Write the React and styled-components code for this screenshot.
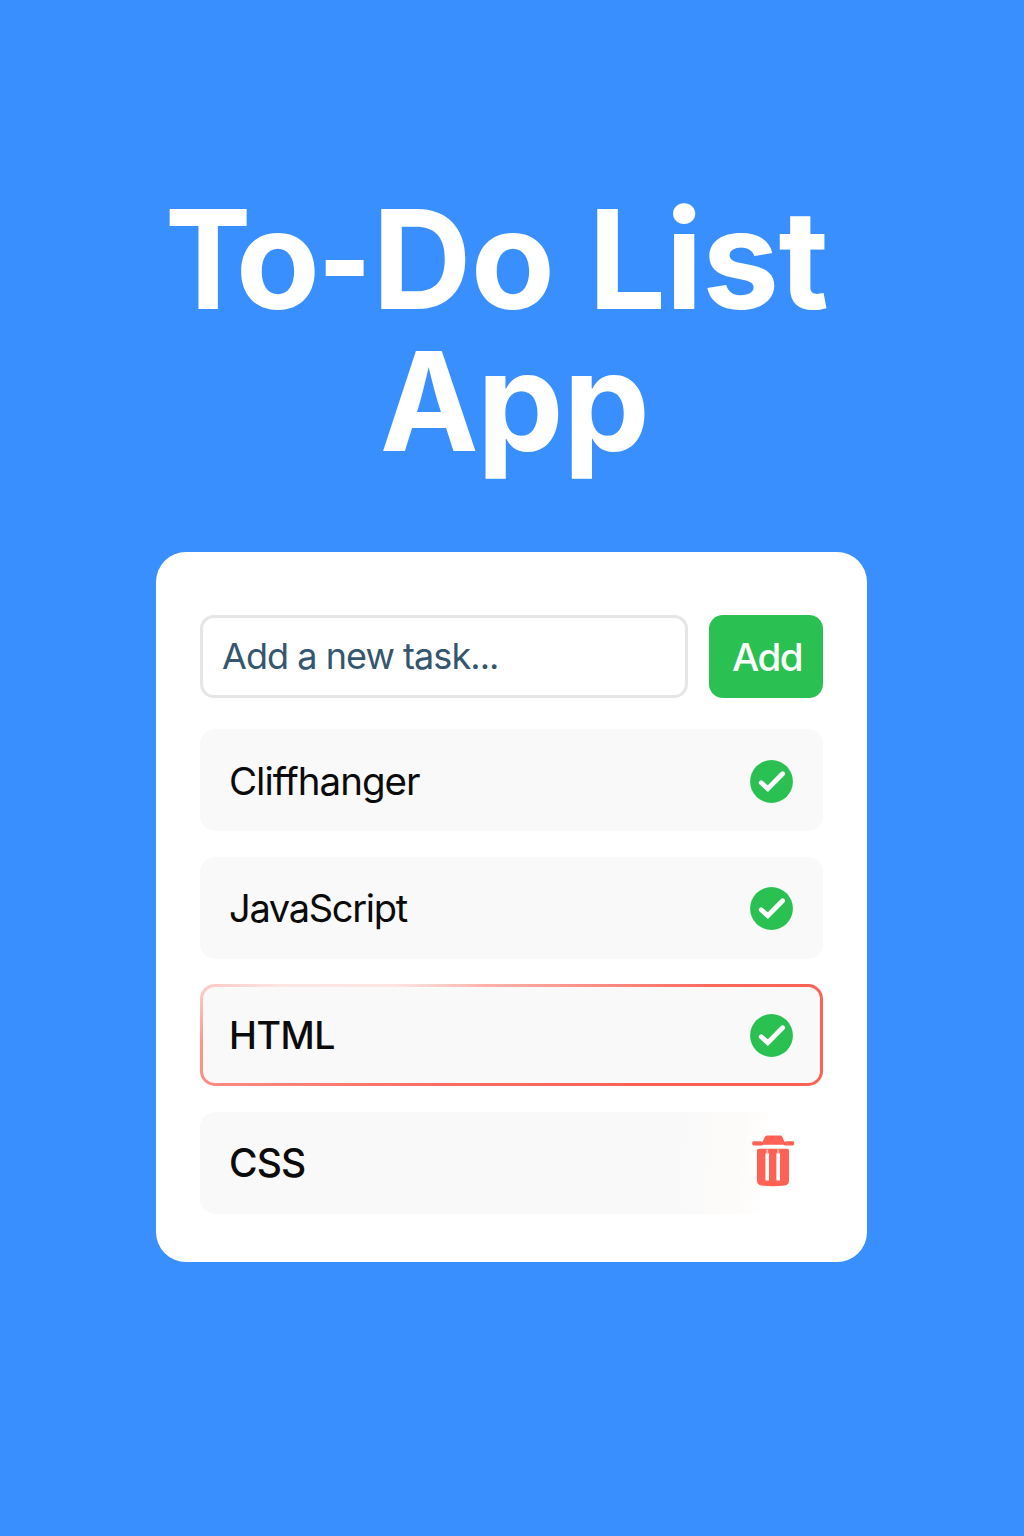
import React from "react";
import styled, { createGlobalStyle } from "styled-components";

const GlobalStyle = createGlobalStyle`
  *, *::before, *::after { box-sizing: border-box; }
  body {
    margin: 0;
    background: #3a8fff;
    font-family: Inter, "Liberation Sans", sans-serif;
  }
`;

const Page = styled.main`
  min-height: 1536px;
  padding-top: 188px;
  display: flex;
  flex-direction: column;
  align-items: center;
  background: #3a8fff;
`;

const Title = styled.h1`
  margin: 0 0 80px;
  width: 711px;
  display: flex;
  flex-direction: column;
  color: #fff;
  font-size: 137.5px;
  font-weight: 700;
  line-height: 142px;
  letter-spacing: -0.6px;
  word-spacing: 1.8px;
  white-space: nowrap;
`;

const TitleLine = styled.span`
  display: block;
  height: 142px;
  padding-left: ${({ $indent }) => $indent}px;
`;

const Narrow = styled.span`
  display: inline-block;
  transform: scaleX(${({ $scale }) => $scale});
  transform-origin: left;
  margin-left: ${({ $lead = 0 }) => $lead}px;
  margin-right: ${({ $pull }) => -$pull}px;
`;

const Card = styled.section`
  width: 711px;
  height: 710px;
  margin-right: 1px;
  padding: 63px 44px 48px;
  border-radius: 30px;
  background: #fff;
`;

const Form = styled.form`
  display: flex;
  gap: 21px;
  height: 83px;
  margin-bottom: 31px;
`;

const TaskInput = styled.input`
  flex: 1;
  min-width: 0;
  padding: 0 19px 2px;
  border: 3px solid #e5e6e6;
  border-radius: 14px;
  background: #fff;
  outline: none;
  font: 400 36px Inter, "Liberation Sans", sans-serif;
  letter-spacing: -0.95px;
  color: #34566e;
  &::placeholder { color: #34566e; opacity: 1; }
`;

const AddButton = styled.button`
  width: 114px;
  padding: 0 0 0 2px;
  border: 0;
  border-radius: 14px;
  background: #2ac152;
  color: #fff;
  font: 500 38.5px Inter, "Liberation Sans", sans-serif;
  letter-spacing: -1.5px;
`;

const List = styled.ul`
  list-style: none;
  margin: 0;
  padding: 0;
  display: flex;
  flex-direction: column;
  gap: 25.5px;
`;

const backgrounds = {
  plain: "#f9f9f9",
  fading: "linear-gradient(96deg, #f9f9f9 0 76%, #fdfbfa 86%, #fff 91%)",
  outlined: `linear-gradient(#f9f9f9, #f9f9f9) padding-box,
    radial-gradient(ellipse 380px 60px at 22% 0, rgba(255,238,236,.9) 15%, rgba(255,238,236,.45) 40%, rgba(255,238,236,0) 100%) border-box,
    linear-gradient(150deg, #ff9f99 0%, #ff8c85 22%, #fb6e63 50%, #fb6154 78%) border-box`,
};

const Row = styled.li`
  height: 102px;
  padding: ${({ $drop }) => $drop}px 27px 0 26px;
  display: flex;
  align-items: center;
  justify-content: space-between;
  border: 3px solid transparent;
  border-radius: 15px;
  background: ${({ $look }) => backgrounds[$look]};
  background-origin: border-box;
  background-clip: ${({ $look }) => ($look === "outlined" ? "padding-box, border-box, border-box" : "border-box")};
`;

const TaskName = styled.span`
  color: #0b0b0c;
  font-size: ${({ $size }) => $size}px;
  font-weight: ${({ $weight }) => $weight};
  letter-spacing: ${({ $tracking }) => $tracking}px;
  line-height: 1.2;
`;

const IconButton = styled.button`
  padding: 0;
  border: 0;
  background: none;
  display: flex;
`;

const TrashSvg = styled.svg`
  margin: 0 -1.5px 6px 0;
`;

const CheckIcon = () => (
  <svg width="43" height="43" viewBox="0 0 43 43">
    <circle cx="21.5" cy="21.5" r="21.4" fill="#2ac152" />
    <path d="M11.2 22.8 17.8 28.6 32.6 13.7" fill="none" stroke="#fff" strokeWidth="4.8" strokeLinecap="round" />
  </svg>
);

const TrashIcon = () => (
  <TrashSvg width="43" height="52" viewBox="0 0 43 52">
    <g fill="#ff6154">
      <path d="M15 .5H28.4Q30 .5 30.5 2L32.2 6.3Q32.8 7.8 34 6.2H40.8Q42.2 6.2 42.2 7.4V9Q42.2 10.4 40.8 10.4H34Q32 10.4 31.5 9.7H11.5Q11 10.4 9 10.4H1.6Q.2 10.4.2 9V7.4Q.2 6.2 1.6 6.2H8.8Q10.2 7.8 10.8 6.3L12.9 2Q13.4.5 15 .5Z" />
      <path d="M6.8 13.7H35.2Q37 13.7 37 15.5V45.5Q37 50 32.5 50.5Q21 51.8 9.5 50.5Q5 50 5 45.5V15.5Q5 13.7 6.8 13.7Z" />
    </g>
    <path d="M13.4 18.2h3.6v27.3h-3.6zM24.4 18.2h3.6v27.3h-3.6z" fill="#fff" />
    <path d="M14.2 14.2h2v4h-2zM25.2 14.2h2v4h-2z" fill="#ffb0a9" />
  </TrashSvg>
);

const tasks = [
  { name: "Cliffhanger", look: "plain", size: 38.5, tracking: -1, weight: 400, drop: 2 },
  { name: "JavaScript", look: "plain", size: 38, tracking: -1.3, weight: 400, drop: 2.5 },
  { name: "HTML", look: "outlined", size: 37.5, tracking: -0.5, weight: 500, drop: 0 },
  { name: "CSS", look: "fading", size: 39, tracking: -0.9, weight: 500, drop: 2, removing: true },
];

export default function App() {
  return (
    <>
      <GlobalStyle />
      <Page>
        <Title>
          <TitleLine $indent={8}>
            <Narrow $scale={0.94} $pull={20}>T</Narrow>o<Narrow $scale={0.83} $lead={-1.5} $pull={9.5}>-</Narrow>Do List
          </TitleLine>
          <TitleLine $indent={223}>
            <Narrow $scale={0.96} $pull={4.5}>A</Narrow>pp
          </TitleLine>
        </Title>
        <Card>
          <Form onSubmit={(e) => e.preventDefault()}>
            <TaskInput placeholder="Add a new task..." />
            <AddButton type="submit">Add</AddButton>
          </Form>
          <List>
            {tasks.map(({ name, look, size, tracking, weight, drop, removing }) => (
              <Row key={name} $look={look} $drop={drop}>
                <TaskName $size={size} $tracking={tracking} $weight={weight}>{name}</TaskName>
                <IconButton aria-label={removing ? "Delete" : "Done"}>
                  {removing ? <TrashIcon /> : <CheckIcon />}
                </IconButton>
              </Row>
            ))}
          </List>
        </Card>
      </Page>
    </>
  );
}
